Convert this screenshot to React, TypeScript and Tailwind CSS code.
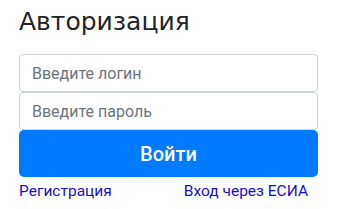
export default function App() {
  return (
    <div className="w-[338px] h-[209px] bg-white px-[19px] pt-[5px] font-['Roboto',sans-serif]">
      <h1 className="text-[25px] leading-[34px] text-[#212529] font-['DejaVu_Sans',sans-serif] font-normal">
        Авторизация
      </h1>
      <form className="mt-[15px] flex w-[299px] flex-col" onSubmit={(e) => e.preventDefault()}>
        <input
          type="text"
          placeholder="Введите логин"
          className="h-[38px] rounded-[4px] border border-[#ced4da] px-3 text-base text-[#495057] placeholder:text-[#6c757d] outline-none"
        />
        <input
          type="password"
          placeholder="Введите пароль"
          className="h-[38px] rounded-[4px] border border-[#ced4da] px-3 text-base text-[#495057] placeholder:text-[#6c757d] outline-none"
        />
        <button
          type="submit"
          className="h-[47px] rounded-[5px] bg-[#007bff] text-[20px] font-medium text-white"
        >
          Войти
        </button>
        <div className="mt-[2px] flex justify-between pr-[10px] text-[15.5px] leading-[24px] text-[#1a0dcc]">
          <a href="#">Регистрация</a>
          <a href="#">Вход через ЕСИА</a>
        </div>
      </form>
    </div>
  )
}
